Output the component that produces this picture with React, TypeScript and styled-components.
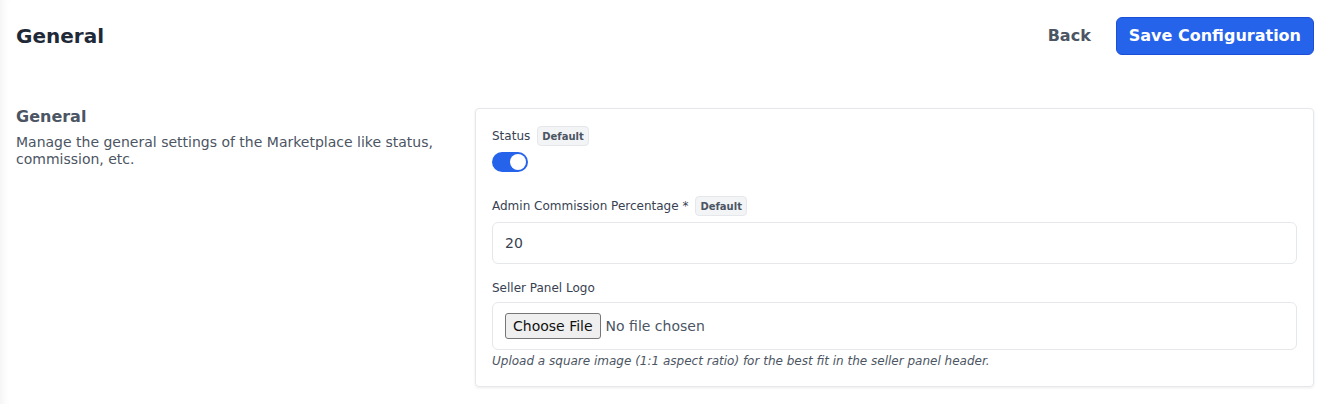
import React, { useState } from "react";
import styled, { createGlobalStyle } from "styled-components";

const GlobalStyle = createGlobalStyle`
  html, body {
    margin: 0;
    padding: 0;
    background: #ffffff;
    font-family: "DejaVu Sans", "Noto Sans", sans-serif;
  }
`;

const Page = styled.div`
  min-height: 404px;
  box-sizing: border-box;
  padding: 0 16px 16px 16px;
  box-shadow: inset 8px 0 8px -6px rgba(0, 0, 0, 0.06);
`;

const Header = styled.div`
  display: flex;
  align-items: center;
  justify-content: space-between;
  height: 72px;
`;

const Title = styled.h1`
  margin: 0;
  font-size: 20px;
  font-weight: bold;
  color: #1f2937;
`;

const Actions = styled.div`
  display: flex;
  align-items: center;
  gap: 11px;
  margin-top: -1px;
`;

const Button = styled.button<{ $primary?: boolean }>`
  font-family: inherit;
  font-size: 16px;
  font-weight: bold;
  height: 38px;
  padding: 0 ${(p) => (p.$primary ? 12 : 13)}px;
  border-radius: 6px;
  cursor: pointer;
  border: 1px solid ${(p) => (p.$primary ? "#1d4ed8" : "transparent")};
  background: ${(p) => (p.$primary ? "#2563eb" : "transparent")};
  color: ${(p) => (p.$primary ? "#ffffff" : "#4b5563")};
`;

const Section = styled.div`
  display: grid;
  grid-template-columns: 439px 1fr;
  gap: 20px;
  margin-top: 36px;
`;

const Intro = styled.div``;

const SectionTitle = styled.h2`
  margin: 0 0 8px 0;
  font-size: 16px;
  font-weight: bold;
  color: #4b5563;
  line-height: 18px;
`;

const SectionText = styled.p`
  margin: 0;
  font-size: 14px;
  line-height: 17px;
  color: #4b5563;
`;

const Card = styled.div`
  border: 1px solid #e5e7eb;
  border-radius: 4px;
  padding: 17px 16px 17px 16px;
  box-shadow: 0 1px 3px rgba(0, 0, 0, 0.08);
  display: flex;
  flex-direction: column;
`;

const Field = styled.div<{ $gap?: number }>`
  margin-bottom: ${(p) => p.$gap ?? 16}px;
  &:last-child {
    margin-bottom: 0;
  }
`;

const LabelRow = styled.div<{ $badge?: boolean }>`
  display: flex;
  align-items: center;
  gap: 7px;
  height: ${(p) => (p.$badge ? 20 : 16)}px;
  margin-bottom: 6px;
`;

const Label = styled.label`
  font-size: 12px;
  color: #374151;
`;

const Badge = styled.span`
  font-size: 10px;
  font-weight: bold;
  color: #4b5563;
  background: #f3f4f6;
  border: 1px solid #e5e7eb;
  border-radius: 4px;
  padding: 0 4px;
  height: 20px;
  box-sizing: border-box;
  display: inline-flex;
  align-items: center;
`;

const Toggle = styled.button<{ $on: boolean }>`
  width: 36px;
  height: 20px;
  border-radius: 10px;
  border: none;
  cursor: pointer;
  background: ${(p) => (p.$on ? "#2563eb" : "#d1d5db")};
  display: flex;
  align-items: center;
  justify-content: ${(p) => (p.$on ? "flex-end" : "flex-start")};
  padding: 0 2px;
  box-sizing: border-box;
`;

const Knob = styled.span`
  width: 16px;
  height: 16px;
  border-radius: 50%;
  background: #ffffff;
`;

const TextInput = styled.input`
  display: block;
  width: 100%;
  box-sizing: border-box;
  height: 42px;
  border: 1px solid #e5e7eb;
  border-radius: 6px;
  padding: 0 12px;
  font-family: inherit;
  font-size: 14px;
  color: #374151;
  outline: none;
`;

const FileBox = styled.div`
  border: 1px solid #e5e7eb;
  border-radius: 6px;
  height: 48px;
  box-sizing: border-box;
  padding: 0 12px;
  display: flex;
  align-items: center;
`;

const FileInput = styled.input`
  font-family: inherit;
  font-size: 14px;
  color: #4b5563;

  &::file-selector-button {
    font-family: inherit;
    font-size: 14px;
    color: #111111;
    background: #efefef;
    border: 1px solid #767676;
    border-radius: 3px;
    height: 26px;
    padding: 0 7px;
    margin-right: 5px;
  }
`;

const Hint = styled.p`
  margin: 3px 0 0 0;
  font-size: 12px;
  line-height: 16px;
  font-style: italic;
  color: #4b5563;
`;

export default function App() {
  const [status, setStatus] = useState(true);
  const [commission, setCommission] = useState("20");

  return (
    <>
      <GlobalStyle />
      <Page>
        <Header>
          <Title>General</Title>
          <Actions>
            <Button>Back</Button>
            <Button $primary>Save Configuration</Button>
          </Actions>
        </Header>

        <Section>
          <Intro>
            <SectionTitle>General</SectionTitle>
            <SectionText>
              Manage the general settings of the Marketplace like status,
              commission, etc.
            </SectionText>
          </Intro>

          <Card>
            <Field $gap={24}>
              <LabelRow $badge>
                <Label>Status</Label>
                <Badge>Default</Badge>
              </LabelRow>
              <Toggle $on={status} onClick={() => setStatus((s) => !s)}>
                <Knob />
              </Toggle>
            </Field>

            <Field>
              <LabelRow $badge>
                <Label>Admin Commission Percentage *</Label>
                <Badge>Default</Badge>
              </LabelRow>
              <TextInput
                value={commission}
                onChange={(e) => setCommission(e.target.value)}
              />
            </Field>

            <Field>
              <LabelRow>
                <Label>Seller Panel Logo</Label>
              </LabelRow>
              <FileBox>
                <FileInput type="file" />
              </FileBox>
              <Hint>
                Upload a square image (1:1 aspect ratio) for the best fit in
                the seller panel header.
              </Hint>
            </Field>
          </Card>
        </Section>
      </Page>
    </>
  );
}
